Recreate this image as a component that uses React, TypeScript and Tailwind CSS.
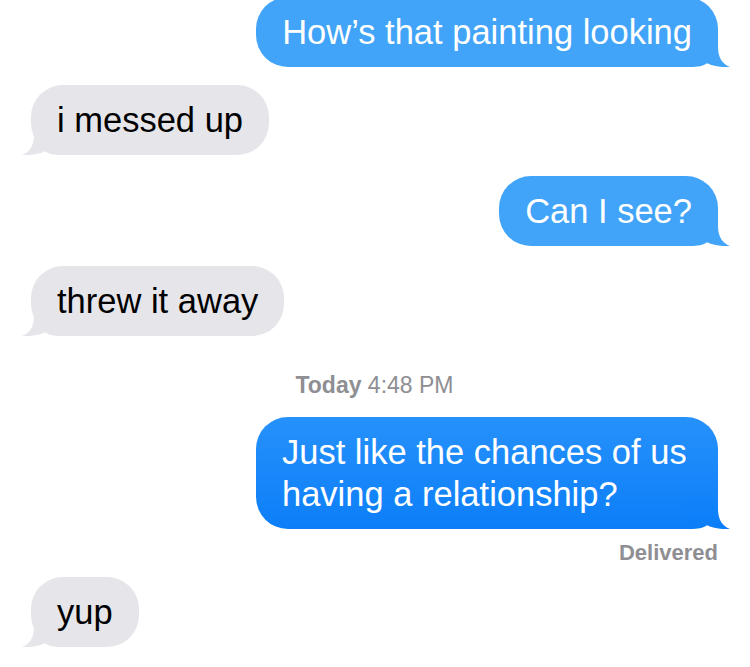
import type { ReactNode } from 'react'

const font = { fontFamily: '"Liberation Sans", Arial, sans-serif' }

function Tail({ side, top, bottom, id }: { side: 'left' | 'right'; top: string; bottom: string; id: string }) {
  // little hook at the bottom corner of the bubble
  const cls = side === 'right' ? 'absolute -right-[12px] bottom-0' : 'absolute -left-[9px] bottom-0 -scale-x-100'
  return (
    <svg className={cls} width="44" height="32" viewBox="0 0 44 32">
      <defs>
        <linearGradient id={id} x1="0" y1="0" x2="0" y2="1">
          <stop offset="0" stopColor={top} />
          <stop offset="1" stopColor={bottom} />
        </linearGradient>
      </defs>
      <path d="M0 0 H32 V12 C32 22 36 29 44 32 C38 32.6 28 31.6 21 28.2 C17 31 12 32 4 32 H0 Z" fill={`url(#${id})`} />
    </svg>
  )
}

function Sent({ children, id, tone = 'light', className = '' }: { children: ReactNode; id: string; tone?: 'light' | 'deep'; className?: string }) {
  const bg = tone === 'light' ? 'bg-[#41a4f8] whitespace-nowrap' : 'max-w-[462px] bg-gradient-to-b from-[#2591fb] to-[#0b7ef8]'
  return (
    <div className={`flex justify-end ${className}`}>
      <div className={`relative rounded-[32px] ${bg} px-[26px] py-[14px] text-[34.5px] leading-[42px] text-white`}>
        {tone === 'light' ? (
          <Tail side="right" id={id} top="#41a4f8" bottom="#41a4f8" />
        ) : (
          <Tail side="right" id={id} top="#1283f9" bottom="#0b7ef8" />
        )}
        <span className="relative">{children}</span>
      </div>
    </div>
  )
}

function Received({ children, id, className = '' }: { children: ReactNode; id: string; className?: string }) {
  return (
    <div className={`flex justify-start ${className}`}>
      <div className="relative whitespace-nowrap rounded-[32px] bg-[#e5e5ea] px-[26px] py-[14px] text-[34.5px] leading-[42px] text-black">
        <Tail side="left" id={id} top="#e5e5ea" bottom="#e5e5ea" />
        <span className="relative">{children}</span>
      </div>
    </div>
  )
}

export default function App() {
  return (
    <div className="h-[667px] w-[750px] overflow-hidden bg-white pl-[31px] pr-[32px]" style={font}>
      <div className="-mt-[3px] flex flex-col">
        <Sent id="t1">How’s that painting looking</Sent>
        <Received id="t2" className="mt-[18px]">i messed up</Received>
        <Sent id="t3" className="mt-[21px]">Can I see?</Sent>
        <Received id="t4" className="mt-[20px]">threw it away</Received>

        <div className="mt-[36px] text-center text-[23px] leading-[27px] text-[#8e8e93]">
          <span className="font-bold">Today</span> 4:48 PM
        </div>

        <Sent id="t5" tone="deep" className="mt-[18px]">
          Just like the chances of us having a relationship?
        </Sent>
        <div className="mt-[11px] text-right text-[22px] leading-[26px] font-bold text-[#8e8e93]">Delivered</div>
        <Received id="t6" className="mt-[11px]">yup</Received>
      </div>
    </div>
  )
}
